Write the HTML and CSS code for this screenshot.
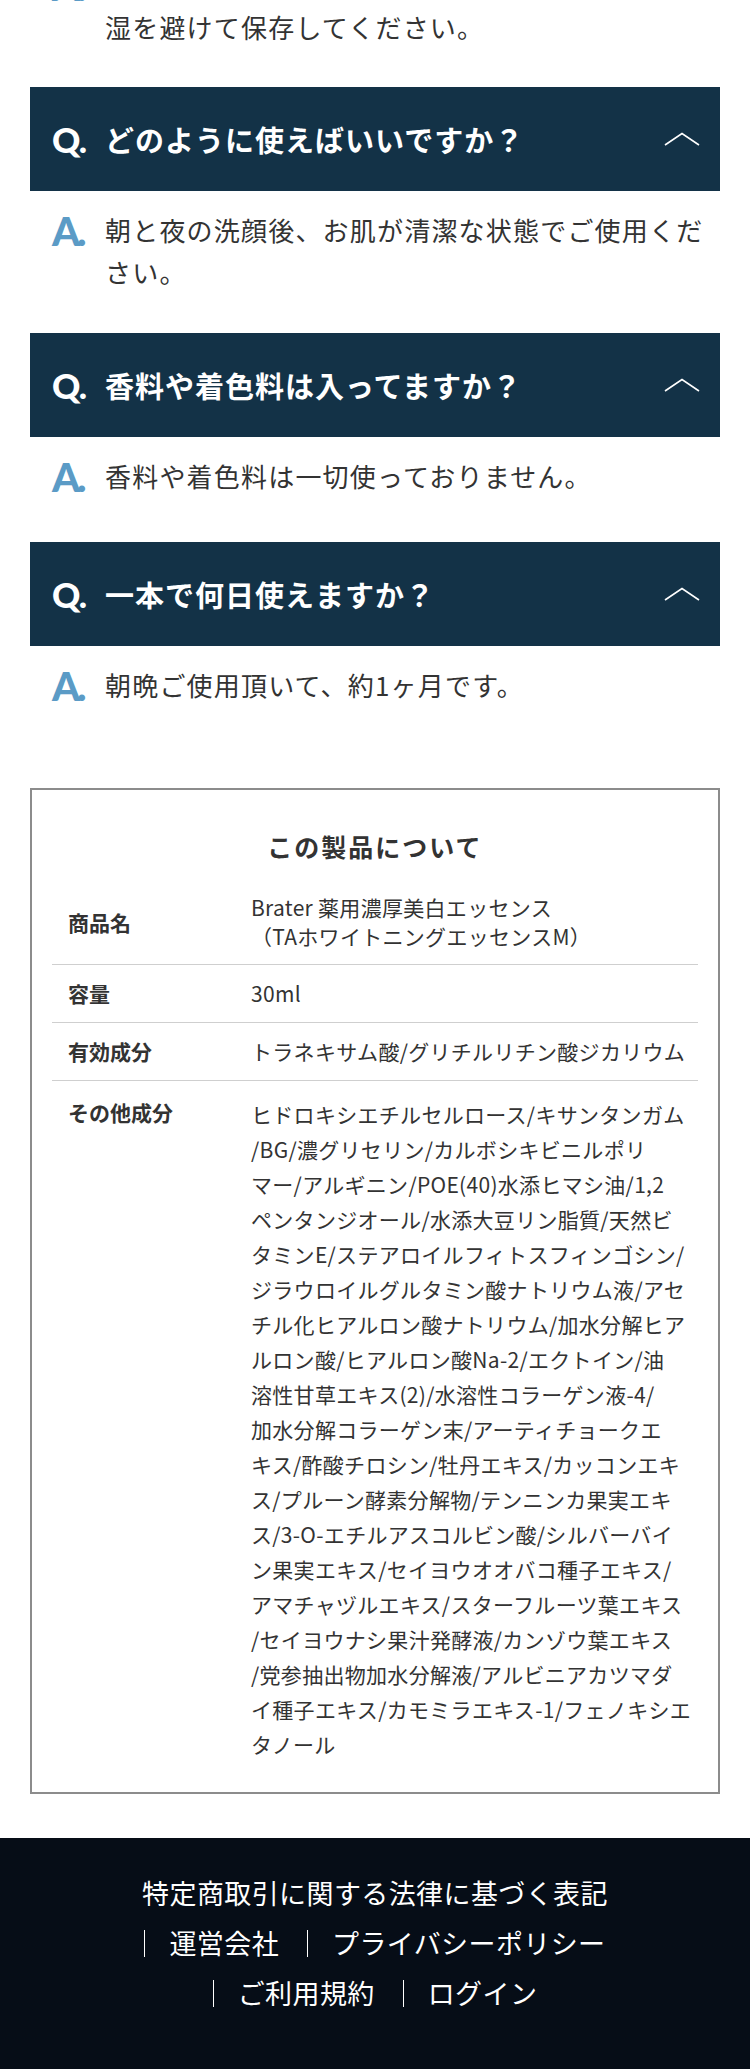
FILE: index.html
```html
<!DOCTYPE html>
<html lang="ja">
<head>
<meta charset="utf-8">
<title>よくあるご質問</title>
<link rel="stylesheet" href="styles.css">
</head>
<body>
<main class="faq">
  <div class="faq-item faq-item--cut">
    <div class="faq-a">
      <span class="faq-mark">A.</span>
      <p class="faq-a-text">直射日光の当たる場所や夏場の車内などの高温多湿を避けて保存してください。</p>
    </div>
  </div>

  <div class="faq-item">
    <div class="faq-q">
      <span class="faq-mark">Q.</span>
      <p class="faq-q-text">どのように使えばいいですか？</p>
      <svg class="faq-chevron" viewBox="0 0 36 14" aria-hidden="true"><polyline points="1,13 18,1.5 35,13" fill="none" stroke="#fff" stroke-width="1.6"/></svg>
    </div>
    <div class="faq-a">
      <span class="faq-mark">A.</span>
      <p class="faq-a-text">朝と夜の洗顔後、お肌が清潔な状態でご使用ください。</p>
    </div>
  </div>

  <div class="faq-item">
    <div class="faq-q">
      <span class="faq-mark">Q.</span>
      <p class="faq-q-text">香料や着色料は入ってますか？</p>
      <svg class="faq-chevron" viewBox="0 0 36 14" aria-hidden="true"><polyline points="1,13 18,1.5 35,13" fill="none" stroke="#fff" stroke-width="1.6"/></svg>
    </div>
    <div class="faq-a">
      <span class="faq-mark">A.</span>
      <p class="faq-a-text">香料や着色料は一切使っておりません。</p>
    </div>
  </div>

  <div class="faq-item">
    <div class="faq-q">
      <span class="faq-mark">Q.</span>
      <p class="faq-q-text">一本で何日使えますか？</p>
      <svg class="faq-chevron" viewBox="0 0 36 14" aria-hidden="true"><polyline points="1,13 18,1.5 35,13" fill="none" stroke="#fff" stroke-width="1.6"/></svg>
    </div>
    <div class="faq-a">
      <span class="faq-mark">A.</span>
      <p class="faq-a-text">朝晩ご使用頂いて、約1ヶ月です。</p>
    </div>
  </div>
</main>

<section class="spec">
  <h2 class="spec-title">この製品について</h2>
  <div class="spec-row spec-row--center">
    <div class="spec-label">商品名</div>
    <div class="spec-value spec-value--name">Brater 薬用濃厚美白エッセンス<br>（TAホワイトニングエッセンスM）</div>
  </div>
  <div class="spec-row">
    <div class="spec-label">容量</div>
    <div class="spec-value">30ml</div>
  </div>
  <div class="spec-row">
    <div class="spec-label">有効成分</div>
    <div class="spec-value">トラネキサム酸/グリチルリチン酸ジカリウム</div>
  </div>
  <div class="spec-row spec-row--list">
    <div class="spec-label">その他成分</div>
    <div class="spec-value spec-value--list">ヒドロキシエチルセルロース/キサンタンガム<br>/BG/濃グリセリン/カルボシキビニルポリ<br>マー/アルギニン/POE(40)水添ヒマシ油/1,2<br>ペンタンジオール/水添大豆リン脂質/天然ビ<br>タミンE/ステアロイルフィトスフィンゴシン/<br>ジラウロイルグルタミン酸ナトリウム液/アセ<br>チル化ヒアルロン酸ナトリウム/加水分解ヒア<br>ルロン酸/ヒアルロン酸Na-2/エクトイン/油<br>溶性甘草エキス(2)/水溶性コラーゲン液-4/<br>加水分解コラーゲン末/アーティチョークエ<br>キス/酢酸チロシン/牡丹エキス/カッコンエキ<br>ス/プルーン酵素分解物/テンニンカ果実エキ<br>ス/3-O-エチルアスコルビン酸/シルバーバイ<br>ン果実エキス/セイヨウオオバコ種子エキス/<br>アマチャヅルエキス/スターフルーツ葉エキス<br>/セイヨウナシ果汁発酵液/カンゾウ葉エキス<br>/党参抽出物加水分解液/アルビニアカツマダ<br>イ種子エキス/カモミラエキス-1/フェノキシエ<br>タノール</div>
  </div>
</section>

<footer class="site-footer">
  <nav class="footer-nav">
    <a class="footer-link" href="#">特定商取引に関する法律に基づく表記</a>
    <a class="footer-link" href="#">運営会社</a>
    <a class="footer-link" href="#">プライバシーポリシー</a>
    <a class="footer-link" href="#">ご利用規約</a>
    <a class="footer-link" href="#">ログイン</a>
  </nav>
</footer>
</body>
</html>
```

FILE: styles.css
```css
* {
  box-sizing: border-box;
}

html,
body {
  margin: 0;
  padding: 0;
  overflow: hidden;
}

body {
  font-family: "Noto Sans CJK JP", "Noto Sans", sans-serif;
  color: #333;
  background: #fff;
}

p {
  margin: 0;
}

/* FAQ list */
.faq {
  padding: 0 30px 37px;
}

.faq-item--cut {
  margin-top: -54px;
}

.faq-item--cut .faq-a {
  padding-bottom: 39px;
}

.faq-mark {
  flex: 0 0 53px;
  font-family: Lato, "Liberation Sans", sans-serif;
  font-weight: 900;
}

.faq-q {
  display: flex;
  align-items: center;
  height: 104px;
  padding: 0 20px 0 22px;
  background: #133247;
  color: #fff;
}

.faq-q .faq-mark {
  font-size: 35px;
  line-height: 1;
  letter-spacing: -1px;
}

.faq-q-text {
  flex: 1;
  font-size: 29px;
  font-weight: 700;
  letter-spacing: 1px;
  line-height: 40px;
}

.faq-chevron {
  flex: none;
  width: 36px;
  height: 14px;
}

.faq-a {
  display: flex;
  align-items: flex-start;
  padding: 18px 0 40px 22px;
}

.faq-a .faq-mark {
  height: 47px;
  color: #5b9bc6;
  font-size: 40px;
  line-height: 45px;
  letter-spacing: -3px;
}

.faq-a-text {
  flex: 1;
  font-size: 26px;
  letter-spacing: 1.2px;
  line-height: 42px;
}

/* Product details */
.spec {
  margin: 0 30px;
  padding: 38px 20px 17px;
  border: 2px solid #8c8c8c;
}

.spec-title {
  margin: 0 0 16px;
  text-align: center;
  font-size: 25px;
  font-weight: 700;
  letter-spacing: 2px;
  line-height: 36px;
}

.spec-row {
  display: flex;
  align-items: flex-start;
  padding: 13px 0 13px 16px;
  border-bottom: 1px solid #cfcfcf;
}

.spec-row--center {
  align-items: center;
}

.spec-row--list {
  padding-top: 16px;
  border-bottom: none;
}

.spec-label {
  flex: 0 0 183px;
  font-size: 21px;
  font-weight: 700;
  line-height: 31px;
}

.spec-value {
  flex: 1;
  font-size: 21px;
  letter-spacing: 0.3px;
  line-height: 31px;
  white-space: nowrap;
}

.spec-value--name {
  line-height: 29px;
}

.spec-value--list {
  line-height: 35px;
}

/* Footer */
.site-footer {
  margin-top: 44px;
  padding: 30px 0 51px;
  background: #060d17;
}

.footer-nav {
  display: flex;
  flex-wrap: wrap;
  justify-content: center;
  column-gap: 28px;
  max-width: 600px;
  margin: 0 auto;
}

.footer-link {
  display: flex;
  align-items: center;
  color: #fff;
  font-size: 27px;
  letter-spacing: 0.4px;
  line-height: 50px;
  text-decoration: none;
}

.footer-link + .footer-link::before {
  content: "";
  width: 1px;
  height: 27px;
  margin-right: 24px;
  background: #fff;
}
```
